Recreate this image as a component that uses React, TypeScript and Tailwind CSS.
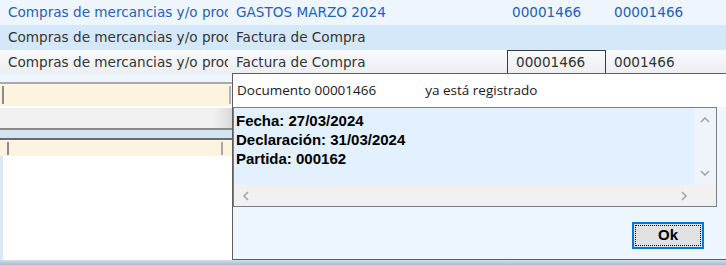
import React from 'react';

const ROWS = [
  { concept: 'Compras de mercancias y/o productos', desc: 'GASTOS MARZO 2024', num: '00001466', ref: '00001466', tone: 'first' },
  { concept: 'Compras de mercancias y/o productos', desc: 'Factura de Compra', num: '', ref: '', tone: 'selected' },
  { concept: 'Compras de mercancias y/o productos', desc: 'Factura de Compra', num: '00001466', ref: '0001466', tone: 'editing' },
];

function Chevron({ dir }: { dir: 'up' | 'down' | 'left' | 'right' }) {
  const pts = {
    up: '1,6 5,2 9,6',
    down: '1,2 5,6 9,2',
    left: '6,1 2,5 6,9',
    right: '2,1 6,5 2,9',
  }[dir];
  const size = dir === 'up' || dir === 'down' ? 'w-[10px] h-[8px]' : 'w-[8px] h-[10px]';
  const vb = dir === 'up' || dir === 'down' ? '0 0 10 8' : '0 0 8 10';
  return (
    <svg viewBox={vb} className={size}>
      <polyline points={pts} fill="none" stroke="#a6a6a6" strokeWidth="1.6" />
    </svg>
  );
}

export default function App() {
  return (
    <div className="relative w-[726px] h-[265px] overflow-hidden bg-white font-['DejaVu_Sans',sans-serif] text-[13.6px]">
      {/* grid rows */}
      {ROWS.map((r, i) => (
        <div
          key={i}
          className={`flex items-center whitespace-nowrap ${i === 2 ? 'h-[24px]' : 'h-[25px]'} ${
            r.tone === 'first'
              ? 'bg-[#eef5fd] text-[#2462b4]'
              : r.tone === 'selected'
              ? 'bg-[#d5e8fa] text-[#333333]'
              : 'bg-gradient-to-b from-[#f8fafc] to-[#eceef1] text-[#333333]'
          }`}
        >
          <div className="w-[228px] pl-2 overflow-hidden">{r.concept}</div>
          <div className="w-[278px] pl-2 overflow-hidden">{r.desc}</div>
          {r.tone === 'editing' ? (
            <div className="ml-[1px] w-[99px] h-[24px] flex items-center pl-2 border border-[#3a3a3a] border-b-0">{r.num}</div>
          ) : (
            <div className="w-[100px] pl-1.5">{r.num}</div>
          )}
          <div className={r.tone === 'editing' ? 'pl-[8px]' : 'pl-[8px]'}>{r.ref}</div>
        </div>
      ))}

      {/* lower panels */}
      <div className="h-[8px] bg-[#eef6fd]" />
      <div className="h-[2px] bg-[#a9a9a9]" />
      <div className="h-[22px] bg-[#fdf3e1] flex items-center justify-between px-[2px]">
        <div className="w-[2px] h-[18px] bg-[#8c8c8c]" />
        <div className="w-[2px] h-[18px] bg-[#b4b4b4] mr-[493px]" />
      </div>
      <div className="h-[2px] bg-white" />
      <div className="h-[20px] bg-[#f0f0f0] flex">
        <div className="w-[214px]" />
        <div className="w-[18px] bg-gradient-to-r from-[#f0f0f0] to-[#dadada]" />
      </div>
      <div className="h-[2px] bg-[#8a8a8a]" />
      <div className="h-[8px] bg-[#d5e4f1]" />
      <div className="h-[2px] bg-[#6b6b6b]" />
      <div className="h-[16px] bg-[#fdf3e1] flex items-center pl-[7px]">
        <div className="w-[2px] h-[13px] bg-[#8c8c8c]" />
        <div className="w-[2px] h-[13px] bg-[#a8a8a8] ml-[212px]" />
      </div>
      <div className="h-[104px] bg-white border-l-[3px] border-[#dce9f5]" />
      <div className="h-[5px] bg-gradient-to-b from-[#d3deea] to-[#a9bbd0]" />

      {/* message dialog */}
      <div className="absolute left-[232px] top-[73px] w-[494px] h-[187px] border-l border-t border-b border-[#5f5f5f] bg-[#eef6fd] flex flex-col font-['Open_Sans',sans-serif] text-[13.5px] text-[#1a1a1a]">
        <div className="h-[33px] bg-white flex items-center pl-[4px]">
          <span>Documento 00001466</span>
          <span className="ml-[49px]">ya está registrado</span>
        </div>
        <div className="w-[484px] h-[100px] border border-[#7e7e7e] flex flex-col">
          <div className="flex flex-1">
            <div className="flex-1 bg-[#e3f0fd] pt-[3px] pl-[2px] font-['Liberation_Sans',Arial,sans-serif] font-bold text-[15px] leading-[19px] text-black">
              <div>Fecha: 27/03/2024</div>
              <div>Declaración: 31/03/2024</div>
              <div>Partida: 000162</div>
            </div>
            <div className="w-[22px] bg-[#eef4fa] flex flex-col items-center justify-between py-[8px]">
              <Chevron dir="up" />
              <Chevron dir="down" />
            </div>
          </div>
          <div className="h-[21px] bg-[#f0f0f0] flex items-center justify-between pl-[8px] pr-[28px]">
            <Chevron dir="left" />
            <Chevron dir="right" />
          </div>
        </div>
        <div className="flex justify-end pr-[22px] pt-[15px]">
          <button className="w-[72px] h-[27px] border-2 border-[#0078d7] bg-[#e1e1e1] p-[1px]">
            <div className="w-full h-full border border-dotted border-black flex items-center justify-center font-['Liberation_Sans',Arial,sans-serif] font-bold text-[15px] text-black">
              Ok
            </div>
          </button>
        </div>
      </div>
    </div>
  );
}
